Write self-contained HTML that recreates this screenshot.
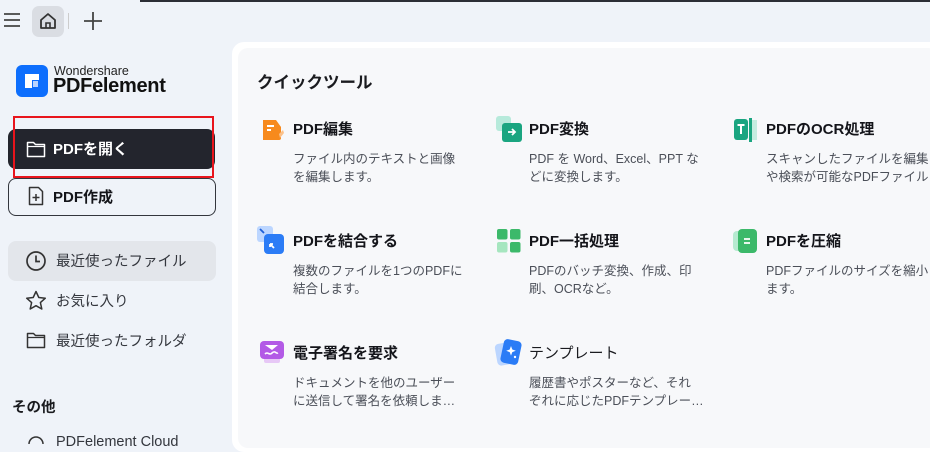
<!DOCTYPE html>
<html><head><meta charset="utf-8"><style>
*{margin:0;padding:0;box-sizing:border-box}
body{width:930px;height:442px;overflow:hidden;background:#eff3f9;font-family:"Liberation Sans","Noto Sans CJK JP",sans-serif;position:relative;color:#1a1b1f}
.a{position:absolute;white-space:nowrap}
.topline{left:140px;top:0;width:790px;height:2px;background:#2b2e36}
.panel{left:232px;top:42px;width:710px;height:410px;background:#fff;border-radius:12px}
.inner{left:238px;top:48px;width:700px;height:400px;background:#f7f8fa;border-radius:10px}
.t{font-size:15px;font-weight:bold;color:#14151a}
.d{font-size:12.5px;color:#4b4f58;line-height:18px}
.nav{font-size:14.5px;color:#33363d}
</style></head><body>
<div class="a topline"></div>
<svg class="a" style="left:3px;top:12px" width="18" height="16"><path d="M1 2h16M1 8h16M1 14h16" stroke="#444" stroke-width="1.8"/></svg>
<div class="a" style="left:32px;top:6px;width:32px;height:31px;background:#dadde3;border-radius:7px"></div>
<svg class="a" style="left:38px;top:11px" width="20" height="20"><path d="M3 9L10 3l7 6v8H3z" fill="none" stroke="#333" stroke-width="1.8" stroke-linejoin="round"/><path d="M8 17v-5h4v5" fill="none" stroke="#333" stroke-width="1.6"/></svg>
<div class="a" style="left:68px;top:13px;width:1px;height:16px;background:#ccc"></div>
<svg class="a" style="left:83px;top:11px" width="20" height="20"><path d="M10 1v18M1 10h18" stroke="#444" stroke-width="1.8"/></svg>
<div class="a" style="left:16px;top:65px;width:32px;height:32px;background:#0d6efd;border-radius:6px"></div>
<svg class="a" style="left:16px;top:65px" width="32" height="32"><path d="M9 9h14v6h-7v8h-7z" fill="#fff"/><path d="M17 16h5v6h-5z" fill="#b9d4ff"/></svg>
<div class="a" style="left:54px;top:64px;font-size:12.5px;color:#222">Wondershare</div>
<div class="a" style="left:53px;top:75px;font-size:20px;font-weight:bold;color:#111;letter-spacing:-0.3px">PDFelement</div>
<div class="a" style="left:8px;top:129px;width:207px;height:40px;background:#23252d;border-radius:8px"></div>
<svg class="a" style="left:26px;top:140px" width="20" height="18"><path d="M1.5 2.5h6l2 2h9v12h-17z" fill="none" stroke="#fff" stroke-width="1.5" stroke-linejoin="round"/><path d="M1.5 6.5h17" stroke="#fff" stroke-width="1.2"/></svg>
<div class="a" style="left:53px;top:138px;font-size:15px;font-weight:bold;color:#fff">PDFを開く</div>
<div class="a" style="left:13px;top:116px;width:201px;height:62px;border:2px solid #e8141c"></div>
<div class="a" style="left:8px;top:178px;width:208px;height:38px;border:1.5px solid #33363d;border-radius:8px"></div>
<svg class="a" style="left:28px;top:186px" width="16" height="20"><path d="M1.5 1.5h9l4 4v13h-13z" fill="none" stroke="#333" stroke-width="1.5" stroke-linejoin="round"/><path d="M8 8v7M4.5 11.5h7" stroke="#333" stroke-width="1.5"/></svg>
<div class="a" style="left:53px;top:186px;font-size:15px;font-weight:bold;color:#14151a">PDF作成</div>
<div class="a" style="left:8px;top:241px;width:208px;height:40px;background:#e3e6eb;border-radius:8px"></div>
<svg class="a" style="left:25px;top:250px" width="22" height="22"><circle cx="11" cy="11" r="9" fill="none" stroke="#333" stroke-width="1.7"/><path d="M11 5.5v6h4" fill="none" stroke="#333" stroke-width="1.7"/></svg>
<div class="a nav" style="left:56px;top:250px">最近使ったファイル</div>
<svg class="a" style="left:25px;top:290px" width="22" height="22"><path d="M11 1.5l2.8 6 6.5.7-4.9 4.4 1.4 6.4L11 15.7 5.2 19l1.4-6.4L1.7 8.2l6.5-.7z" fill="none" stroke="#333" stroke-width="1.5" stroke-linejoin="round"/></svg>
<div class="a nav" style="left:56px;top:290px">お気に入り</div>
<svg class="a" style="left:26px;top:331px" width="20" height="18"><path d="M1.5 2.5h6l2 2h9v12h-17z" fill="none" stroke="#333" stroke-width="1.5" stroke-linejoin="round"/><path d="M1.5 6.5h17" stroke="#333" stroke-width="1.2"/></svg>
<div class="a nav" style="left:56px;top:330px">最近使ったフォルダ</div>
<div class="a" style="left:12px;top:396px;font-size:14.5px;font-weight:bold">その他</div>
<div class="a nav" style="left:56px;top:434px">PDFelement Cloud</div>
<svg class="a" style="left:26px;top:434px" width="20" height="10"><circle cx="10" cy="10" r="7" fill="none" stroke="#333" stroke-width="1.5"/></svg>
<div class="a panel"></div>
<div class="a inner"></div>
<div class="a" style="left:257px;top:69px;font-size:16.5px;font-weight:bold">クイックツール</div>

<svg class="a" style="left:260px;top:117px" width="26" height="26"><path d="M3 3h13l5 7v11a2 2 0 0 1-2 2H3z" fill="#f78a1d"/><path d="M7 9h7M7 13h4" stroke="#fff" stroke-width="2"/><path d="M19 17l4-4 1 3-4 5z" fill="#fbc18a"/></svg>
<div class="a t" style="left:293px;top:118px">PDF編集</div>
<div class="a d" style="left:293px;top:150px">ファイル内のテキストと画像<br>を編集します。</div>

<svg class="a" style="left:496px;top:116px" width="28" height="28"><rect x="0" y="0" width="15" height="15" rx="3" fill="#b7eadb"/><rect x="6" y="7" width="20" height="19" rx="3" fill="#1aa580"/><path d="M12 16h7M16 13l3 3-3 3" fill="none" stroke="#fff" stroke-width="1.8"/></svg>
<div class="a t" style="left:529px;top:118px">PDF変換</div>
<div class="a d" style="left:529px;top:150px">PDF を Word、Excel、PPT な<br>どに変換します。</div>

<svg class="a" style="left:733px;top:117px" width="26" height="26"><rect x="1" y="2" width="14" height="21" rx="3" fill="#1aa580"/><path d="M4.5 8h7M8 8v9" stroke="#fff" stroke-width="2"/><rect x="16" y="1" width="3" height="24" fill="#1aa580"/><rect x="19" y="3" width="5" height="20" fill="#c4ece0"/></svg>
<div class="a t" style="left:766px;top:118px">PDFのOCR処理</div>
<div class="a d" style="left:766px;top:150px">スキャンしたファイルを編集<br>や検索が可能なPDFファイル…</div>

<svg class="a" style="left:257px;top:226px" width="28" height="30"><rect x="0" y="0" width="16" height="16" rx="3" fill="#bcd6ff"/><rect x="7" y="8" width="20" height="20" rx="4" fill="#2b7cf6"/><path d="M3 3l4 4" stroke="#1c5ed8" stroke-width="1.8" fill="none"/><path d="M17 22l-4-4M13 18h3M13 18v3" stroke="#fff" stroke-width="1.8" fill="none"/></svg>
<div class="a t" style="left:293px;top:230px">PDFを結合する</div>
<div class="a d" style="left:293px;top:262px">複数のファイルを1つのPDFに<br>結合します。</div>

<svg class="a" style="left:497px;top:229px" width="24" height="24"><rect x="0" y="0" width="10.5" height="10.5" rx="2" fill="#3cb96a"/><rect x="13" y="0" width="10.5" height="10.5" rx="2" fill="#3cb96a"/><rect x="0" y="13" width="10.5" height="10.5" rx="2" fill="#a6e6bf"/><rect x="13" y="13" width="10.5" height="10.5" rx="2" fill="#3cb96a"/></svg>
<div class="a t" style="left:529px;top:230px">PDF一括処理</div>
<div class="a d" style="left:529px;top:262px">PDFのバッチ変換、作成、印<br>刷、OCRなど。</div>

<svg class="a" style="left:733px;top:229px" width="26" height="24"><rect x="0" y="2" width="10" height="20" rx="4" fill="#b6ead0"/><rect x="5" y="0" width="19" height="24" rx="4" fill="#3cb96a"/><path d="M11 10h6M11 14h6" stroke="#fff" stroke-width="1.8"/></svg>
<div class="a t" style="left:766px;top:230px">PDFを圧縮</div>
<div class="a d" style="left:766px;top:262px">PDFファイルのサイズを縮小し<br>ます。</div>

<svg class="a" style="left:259px;top:340px" width="26" height="24"><rect x="5" y="18" width="16" height="5" rx="2" fill="#e7c8f6"/><rect x="1" y="1" width="24" height="18" rx="4" fill="#b35ae6"/><path d="M6 5h13l-6 5z" fill="#fff"/><path d="M6 14c3-3 4 2 7-1s4 1 6 0" fill="none" stroke="#fff" stroke-width="1.6"/></svg>
<div class="a t" style="left:293px;top:342px">電子署名を要求</div>
<div class="a d" style="left:293px;top:374px">ドキュメントを他のユーザー<br>に送信して署名を依頼しま…</div>

<svg class="a" style="left:494px;top:339px" width="30" height="28"><rect x="2" y="4" width="16" height="22" rx="4" fill="#bcd6ff" transform="rotate(-10 10 15)"/><rect x="8" y="1" width="18" height="24" rx="4" fill="#2b7cf6" transform="rotate(12 17 13)"/><path d="M17 7l1.3 3.5 3.5 1.3-3.5 1.3L17 16.6l-1.3-3.5-3.5-1.3 3.5-1.3z" fill="#fff"/><circle cx="21" cy="18" r="1.2" fill="#fff"/></svg>
<div class="a t" style="left:529px;top:342px;font-weight:normal;color:#1a1b1f">テンプレート</div>
<div class="a d" style="left:529px;top:374px">履歴書やポスターなど、それ<br>ぞれに応じたPDFテンプレー…</div>
</body></html>
